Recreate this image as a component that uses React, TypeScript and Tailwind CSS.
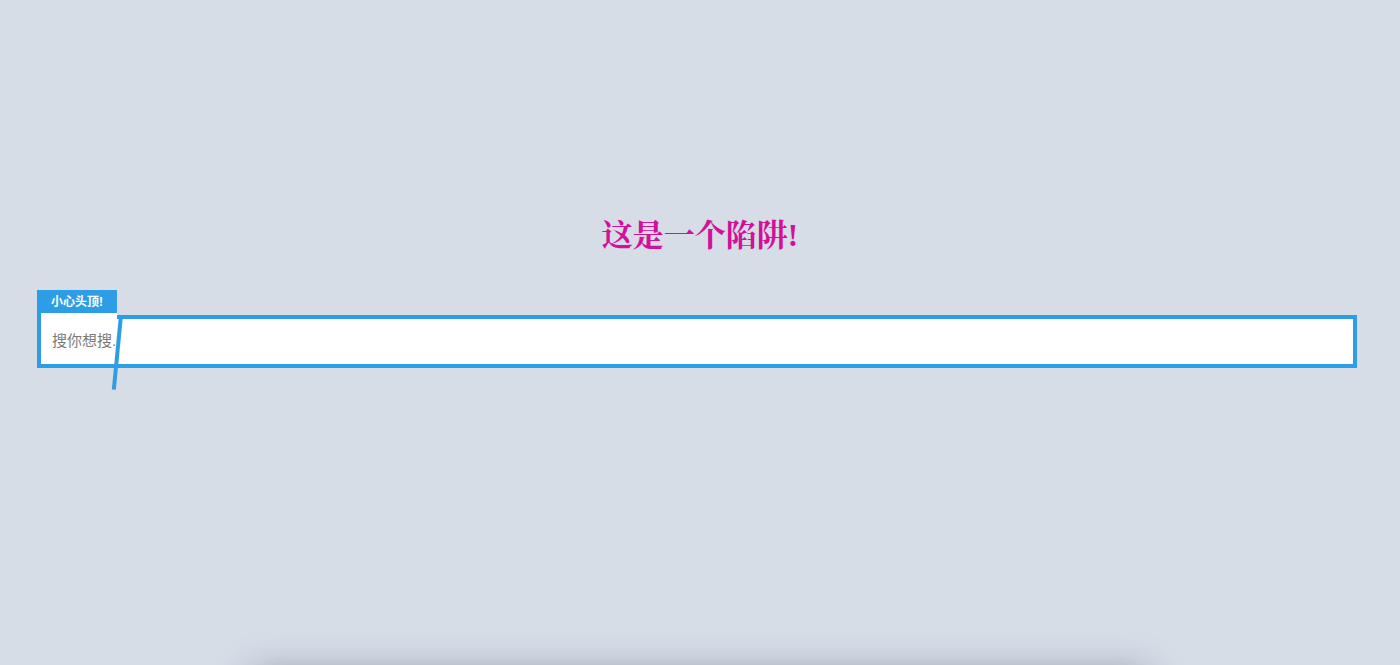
import React from "react";

export default function App() {
  return (
    <div className="relative h-[665px] overflow-hidden bg-[#d6dde7] font-['Liberation_Sans','Noto_Sans_CJK_SC',sans-serif]">
      <div className="pt-[214px] text-center">
        <h1 className="text-[31px] leading-[44px] font-bold text-[#d4109a] font-['Liberation_Serif','Noto_Serif_CJK_SC','Noto_Sans_CJK_SC',serif]">
          这是一个陷阱!
        </h1>
      </div>
      <div className="mt-[32px] ml-[37px] w-[1320px]">
        <div className="w-[80px] h-[23px] bg-[#2d9ee6] text-white text-[12px] font-bold flex items-center justify-center leading-none">
          小心头顶!
        </div>
        <div className="relative flex items-end h-[55px]">
          <div className="w-[80px] h-[55px] pt-[5px] bg-white border-l-4 border-b-4 border-[#2d9ee6] overflow-hidden flex items-center">
            <input
              autoFocus
              className="w-[200px] pl-[11px] bg-transparent outline-none text-[15px] leading-[20px] text-[#555] placeholder:text-[#7a7a7a] caret-[#333]"
              placeholder="搜你想搜..."
            />
          </div>
          <div className="flex-1 h-[53px] bg-white border-t-4 border-r-4 border-b-4 border-[#2d9ee6]" />
          <div className="absolute left-[82px] top-[2px] w-[4px] h-[75px] bg-[#2d9ee6] origin-top rotate-[5.5deg]" />
        </div>
      </div>
      <div className="absolute left-[265px] top-[685px] w-[870px] h-[200px] shadow-[0_0_35px_12px_rgba(40,50,70,0.4)] bg-[#c4cad3]" />
    </div>
  );
}
